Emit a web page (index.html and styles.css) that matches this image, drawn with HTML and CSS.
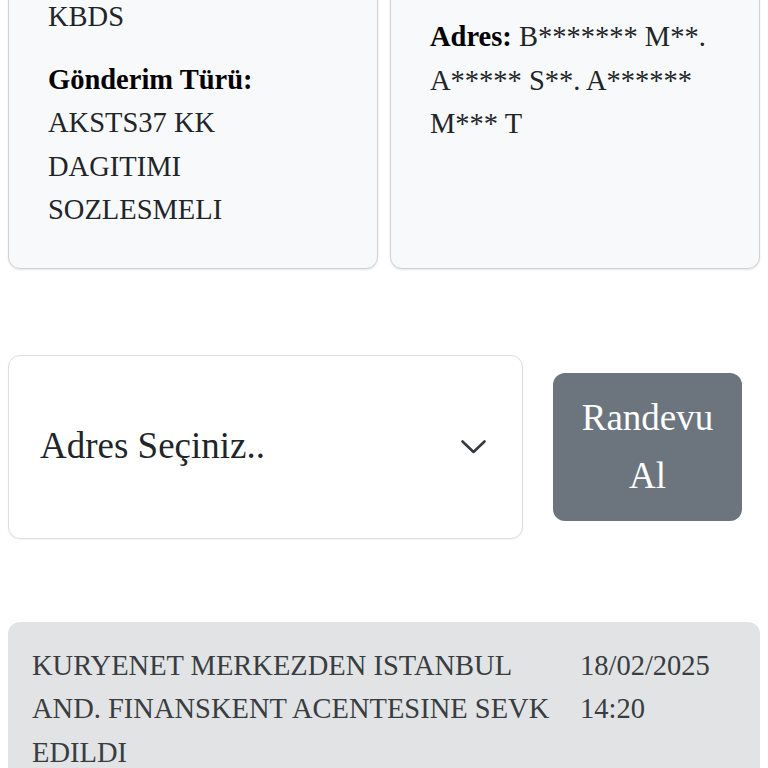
FILE: index.html
```html
<!DOCTYPE html>
<html lang="tr">
<head>
<meta charset="utf-8">
<title>Gönderi</title>
<link rel="stylesheet" href="styles.css">
</head>
<body>
<div class="page">
  <div class="cards">
    <div class="card">
      <p class="field">KBDS</p>
      <p class="field"><strong>Gönderim Türü:</strong> AKSTS37 KK DAGITIMI SOZLESMELI</p>
    </div>
    <div class="card">
      <p class="field first-gap"><strong>Adres:</strong> B******* M**. A***** S**. A****** M*** T</p>
    </div>
  </div>

  <div class="actions">
    <div class="select">
      <span class="select-text">Adres Seçiniz..</span>
      <svg class="chevron" width="27" height="16" viewBox="0 0 27 16" aria-hidden="true">
        <polyline points="2.5,2.5 13.5,13 24.5,2.5" fill="none" stroke="#343a40" stroke-width="2.6" stroke-linecap="round" stroke-linejoin="round"/>
      </svg>
    </div>
    <button class="btn" type="button">Randevu Al</button>
  </div>

  <div class="history">
    <div class="history-desc">KURYENET MERKEZDEN ISTANBUL AND. FINANSKENT ACENTESINE SEVK EDILDI</div>
    <div class="history-date">18/02/2025 14:20</div>
  </div>
</div>
</body>
</html>
```

FILE: styles.css
```css
html, body {
  margin: 0;
  padding: 0;
  background: #ffffff;
}

body {
  font-family: "Liberation Serif", "Times New Roman", serif;
  font-size: 28.5px;
  line-height: 43.5px;
  color: #212529;
  overflow: hidden;
}

.page {
  padding: 0 8px;
}

.cards {
  display: grid;
  grid-template-columns: 370px 370px;
  column-gap: 12px;
  margin-top: -45.7px;
}

.card {
  background: #f8f9fa;
  border: 1px solid #cfd1d3;
  border-radius: 12px;
  padding: 40px 39px 36px;
  box-shadow: 0 1px 2px rgba(0, 0, 0, 0.1);
}

.field {
  margin: 0 0 19px;
}

.field:last-child {
  margin-bottom: 0;
}

.first-gap {
  margin-top: 20px;
}

.field strong {
  font-weight: 700;
  color: #000;
}

.actions {
  display: grid;
  grid-template-columns: 515px 225px;
  column-gap: 12px;
  align-items: center;
  margin-top: 86px;
}

.select {
  box-sizing: border-box;
  height: 184px;
  background: #fff;
  border: 1px solid #dcdee0;
  border-radius: 12px;
  padding: 0 35px 0 31px;
  display: flex;
  align-items: center;
  justify-content: space-between;
  font-size: 37px;
  line-height: 58px;
  color: #212529;
  box-shadow: 0 1px 2px rgba(0, 0, 0, 0.05);
}

.select-text {
  padding-bottom: 2px;
}

.chevron {
  display: block;
}

.btn {
  justify-self: center;
  box-sizing: border-box;
  width: 189px;
  height: 148px;
  padding: 16px 26px;
  background: #6c757d;
  color: #fff;
  border: none;
  border-radius: 12px;
  font-family: "Liberation Serif", "Times New Roman", serif;
  font-size: 37px;
  line-height: 58px;
  text-align: center;
}

.history {
  margin-top: 83px;
  background: #e2e3e5;
  border-radius: 12px;
  padding: 22px 24px 40px;
  display: grid;
  grid-template-columns: 536px auto;
  column-gap: 12px;
  color: #383d41;
}
```
